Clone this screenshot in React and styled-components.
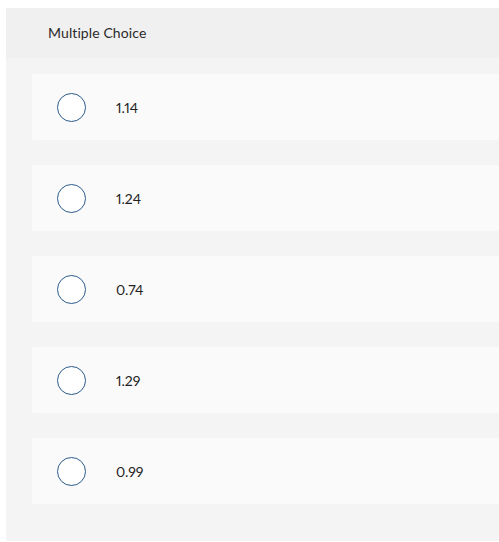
import React from 'react'
import styled, { createGlobalStyle } from 'styled-components'

const GlobalStyle = createGlobalStyle`
    html, body {
        margin: 0;
        padding: 0;
        background: #fff;
        overflow: hidden;
    }
    body {
        font-family: Lato, "Open Sans", sans-serif;
        font-variant-ligatures: none;
        font-variant-numeric: proportional-nums;
        color: #222;
    }
`

const choices = ['1.14', '1.24', '0.74', '1.29', '0.99'];

class App extends React.Component {
    constructor() {
        super();
        this.state = {
            selected: null
        }
    }

    render() {
        return (
            <>
                <GlobalStyle />
                <QuestionContainer>
                    <div className="header">Multiple Choice</div>
                    <div className="options">
                        {choices.map((c, i) => (
                            <Option key={c} onClick={() => this.setState({ selected: i })}>
                                <Radio checked={this.state.selected === i} />
                                <span className="label">{c}</span>
                            </Option>
                        ))}
                    </div>
                </QuestionContainer>
            </>
        );
    }
}

const QuestionContainer = styled.div`
    margin: 8px 0 0 6px;
    width: calc(100vw - 6px);
    .header{
        height: 50px;
        background: #f0f0f0;
        display: flex;
        align-items: center;
        padding: 0 0 2px 42px;
        box-sizing: border-box;
        font-size: 14px;
        letter-spacing: 0.1px;
        color: #2a2a2a;
    }
    .options{
        background: #f4f4f4;
        padding: 16px 0 37px 26px;
        display: flex;
        flex-direction: column;
        gap: 25px;
    }
`

const Option = styled.div`
    height: 66px;
    background: #fafafa;
    border-radius: 2px;
    display: flex;
    align-items: center;
    padding-left: 25px;
    cursor: pointer;
    .label{
        margin-left: 30px;
        font-size: 14px;
        color: #222;
    }
`

const Radio = styled.span`
    flex-shrink: 0;
    width: 29px;
    height: 29px;
    box-sizing: border-box;
    border-radius: 50%;
    border: 1.5px solid #2d5b8c;
    background: ${props => props.checked ? '#2d5b8c' : '#fff'};
    box-shadow: ${props => props.checked ? 'inset 0 0 0 5px #fff' : 'none'};
`

export default App;
